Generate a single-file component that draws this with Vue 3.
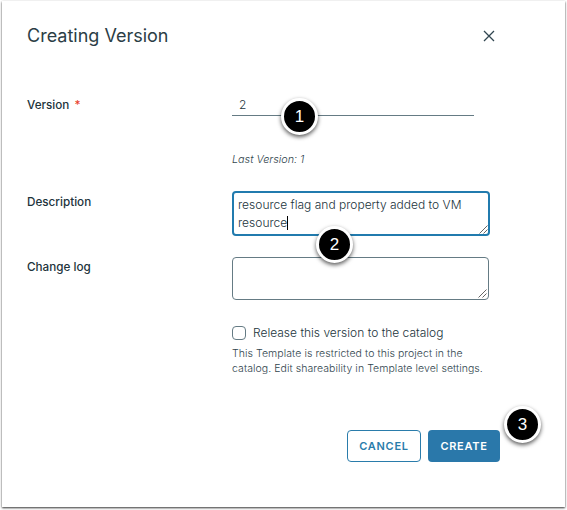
<script setup>
import { ref } from 'vue'

const version = ref('2')
const description = ref('resource flag and property added to VM resource')
</script>

<template>
  <main class="dialog">
    <header class="head">
      <h1>Creating Version</h1>
      <button class="close" aria-label="Close">
        <svg width="12" height="12" viewBox="0 0 12 12"><path d="M1 1 L11 11 M11 1 L1 11" /></svg>
      </button>
    </header>

    <section class="row version">
      <label>Version<b class="req">*</b></label>
      <div class="field">
        <div class="line-input">{{ version }}<i class="step step1">1</i></div>
        <p class="last">Last Version: 1</p>
      </div>
    </section>

    <section class="row desc">
      <label>Description</label>
      <div class="area focused">
        <span class="value">{{ description }}</span><span class="caret"></span>
        <svg class="grip" width="9" height="9" viewBox="0 0 9 9"><path d="M0.5 8.5 L8.5 0.5 M4.5 8.5 L8.5 4.5" /></svg>
        <i class="step step2">2</i>
      </div>
    </section>

    <section class="row log">
      <label>Change log</label>
      <div class="area">
        <svg class="grip" width="9" height="9" viewBox="0 0 9 9"><path d="M0.5 8.5 L8.5 0.5 M4.5 8.5 L8.5 4.5" /></svg>
      </div>
    </section>

    <section class="release">
      <div class="check"><span class="box"></span><span>Release this version to the catalog</span></div>
      <p class="help">This Template is restricted to this project in the<br>catalog. Edit shareability in Template level settings.</p>
    </section>

    <footer class="actions">
      <button class="btn outline">CANCEL</button>
      <button class="btn primary">CREATE<i class="step step3">3</i></button>
    </footer>
  </main>
</template>

<style>
html, body { margin: 0; background: #fff; }
#app { display: flow-root; height: 510px; overflow: hidden; background: #fff; }
</style>

<style scoped>
* { box-sizing: border-box; }
.dialog {
  width: 563px; height: 506px; margin: 1px 2px 0; padding: 22px 0 0 25px;
  display: flow-root;
  background: #fff; color: #21333b;
  box-shadow: 0 1px 2px rgba(0, 0, 0, .8);
  font-family: Inter, "Open Sans", sans-serif; font-size: 12px;
}
h1, p { margin: 0; font-weight: 400; }
button { margin: 0; padding: 0; border: 0; background: none; font: inherit; }
.head { display: flex; justify-content: space-between; width: 468px; height: 24px; }
h1 { font-size: 18px; line-height: 25px; white-space: nowrap; color: #2b3d45; }
.close { width: 12px; height: 12px; margin-top: 7px; }
svg { display: block; fill: none; stroke: #314650; stroke-width: 1.3; }
.row { display: grid; grid-template-columns: 205px 257px; }
label { font-weight: 500; line-height: 18px; font-size: 11.7px; padding-top: 2px; }
.version { margin-top: 48px; height: 96px; }
.version label { padding-top: 1px; }
.req { color: #e8402a; font-weight: 500; margin-left: 5px; }
.line-input {
  position: relative; width: 242px; height: 21px; padding-left: 7px;
  border-bottom: 1px solid #657b84; line-height: 20px; font-size: 12px; font-weight: 300;
}
.last { margin-top: 34px; font-size: 10.8px; line-height: 19px; font-style: italic; font-weight: 300; color: #30444d; }
.desc { height: 65px; }
.log { height: 65px; }
.area {
  position: relative; width: 257px; height: 43px; padding: 4px 5px;
  border: 1px solid #657b84; border-radius: 4px;
  font-size: 12px; line-height: 18px; font-weight: 300; color: #21333b;
}
.area.focused { width: 258px; height: 45px; border: 2px solid #217bae; padding: 3px 4px; }
.log .area { margin-top: 1px; }
.caret { display: inline-block; width: 1px; height: 14px; background: #000; vertical-align: -3px; }
.grip { position: absolute; right: 1px; bottom: 1px; stroke: #555; stroke-width: .9; }
.focused .grip { right: 0; bottom: 0; }
.release { margin: 2px 0 0 205px; }
.check { display: flex; align-items: center; height: 18px; padding-top: 1px; font-size: 12px; font-weight: 300; white-space: nowrap; }
.box { width: 14px; height: 14px; margin-right: 7px; border: 1px solid #657b84; border-radius: 4px; }
.help { margin-top: 5px; font-size: 10.5px; line-height: 15px; letter-spacing: .07px; font-weight: 300; white-space: nowrap; color: #30444d; }
.actions { display: flex; gap: 7px; margin: 54px 0 0 320px; }
.btn { height: 32px; border-radius: 4px; font-size: 11px; font-weight: 600; letter-spacing: .7px; text-align: center; }
.outline { width: 74px; border: 1px solid #2a7cab; color: #2a7cab; }
.primary { position: relative; width: 72px; background: #2a78aa; color: #fff; }
.step {
  position: absolute; width: 37px; height: 37px; border: 3px solid #fff; border-radius: 50%;
  background: #000; color: #fff; box-shadow: 0 2px 4px rgba(0, 0, 0, .65);
  font: 400 17px/31px "Liberation Sans", Arial, sans-serif; letter-spacing: 0; text-align: center; z-index: 2;
}
.step1 { left: 49px; top: 3px; }
.step2 { left: 82px; top: 33px; }
.step3 { left: 76px; top: -24px; }
</style>
